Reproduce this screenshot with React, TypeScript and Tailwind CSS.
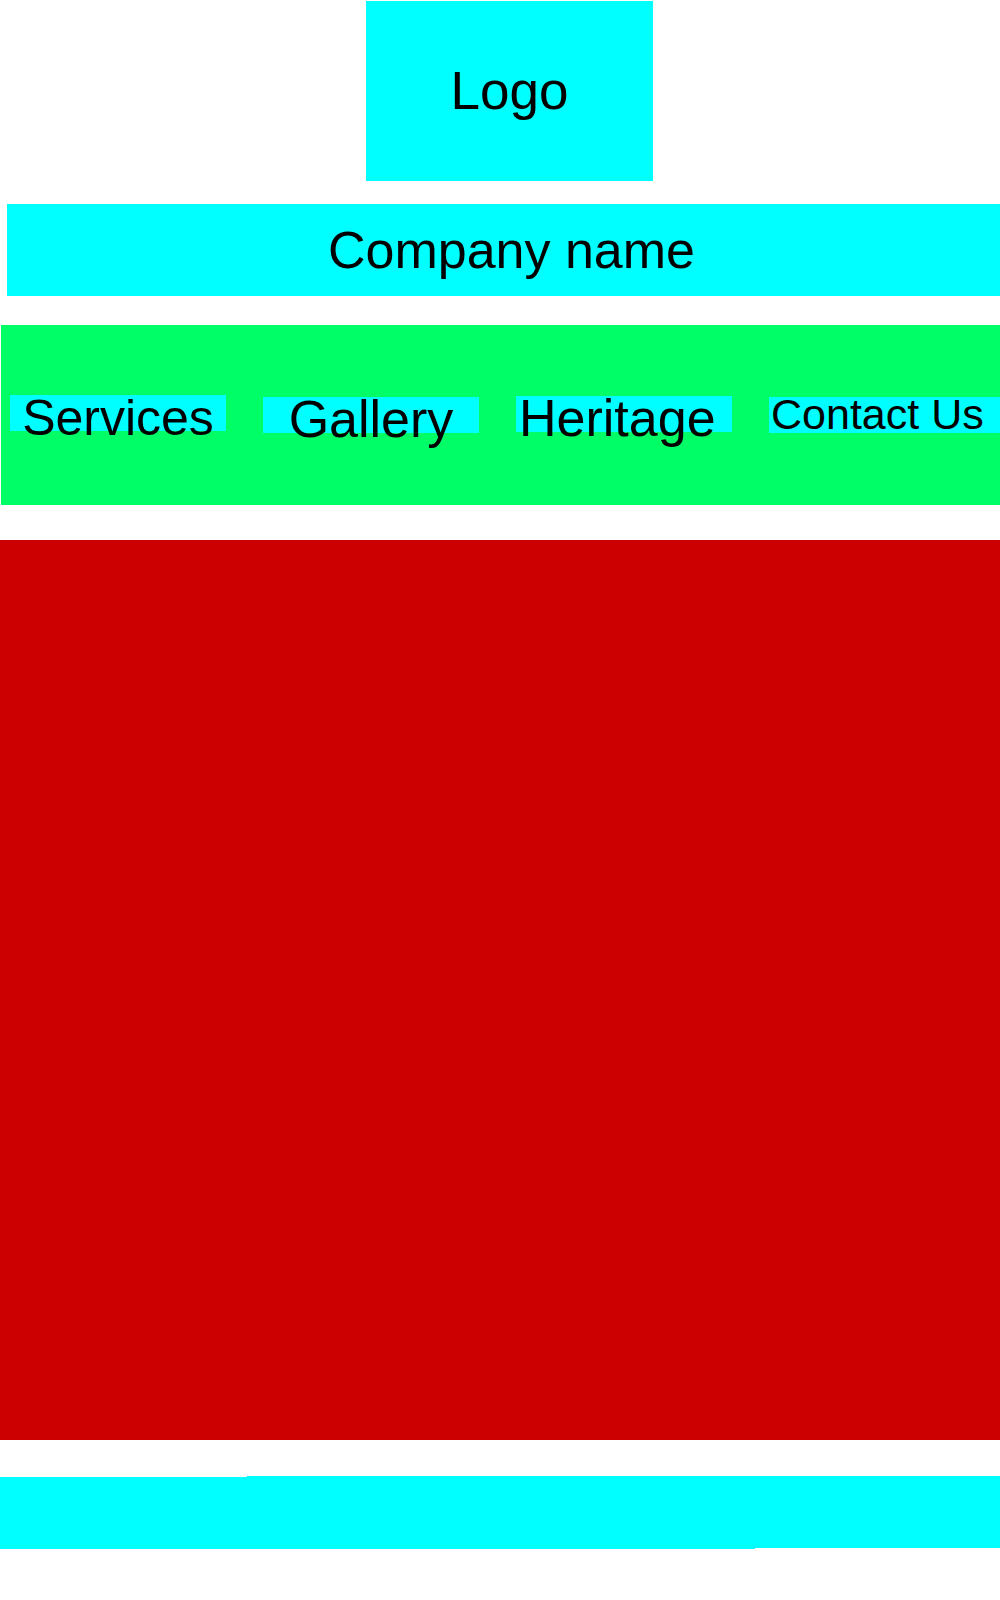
const navItems = [
  { label: "Services", box: "ml-[9px] mt-0 justify-center", text: "text-[50px] leading-[46px]" },
  { label: "Gallery", box: "ml-[37px] mt-[2px] justify-center", text: "text-[52px] leading-[44px]" },
  { label: "Heritage", box: "ml-[37px] mt-[1px] justify-start pl-[3px]", text: "text-[52px] leading-[44px]" },
  { label: "Contact Us", box: "ml-[37px] mt-[2px] justify-start pl-[2px]", text: "text-[43px] leading-[35px]" },
];

export default function App() {
  return (
    <div className="w-[1000px] overflow-hidden bg-white text-black font-['Liberation_Sans',Arial,sans-serif]">
      <header>
        <div className="ml-[366px] mt-[1px] flex h-[180px] w-[287px] items-center justify-center bg-[#00ffff] text-[53px]">
          Logo
        </div>

        <div className="ml-[7px] mt-[23px] flex h-[92px] items-center justify-center bg-[#00ffff] pl-[16px] text-[52px]">
          Company name
        </div>
      </header>

      <nav className="ml-[1px] mt-[29px] flex h-[180px] items-start bg-[#00ff66] pt-[70px]">
        {navItems.map((item, i) => (
          <div
            key={item.label}
            className={`flex h-[36px] whitespace-nowrap bg-[#00ffff] ${item.box} ${
              i === navItems.length - 1 ? "flex-1" : "w-[216px]"
            }`}
          >
            <span className={item.text}>{item.label}</span>
          </div>
        ))}
      </nav>

      <main className="mt-[35px] h-[900px] bg-[#cc0000]" />

      <footer className="mt-[36px] flex h-[73px] items-start">
        <div className="mt-[1px] h-[72px] w-[247px] bg-[#00ffff]" />
        <div className="h-[73px] w-[254px] bg-[#00ffff]" />
        <div className="h-[73px] w-[254px] bg-[#00ffff]" />
        <div className="h-[72px] flex-1 bg-[#00ffff]" />
      </footer>
    </div>
  );
}
